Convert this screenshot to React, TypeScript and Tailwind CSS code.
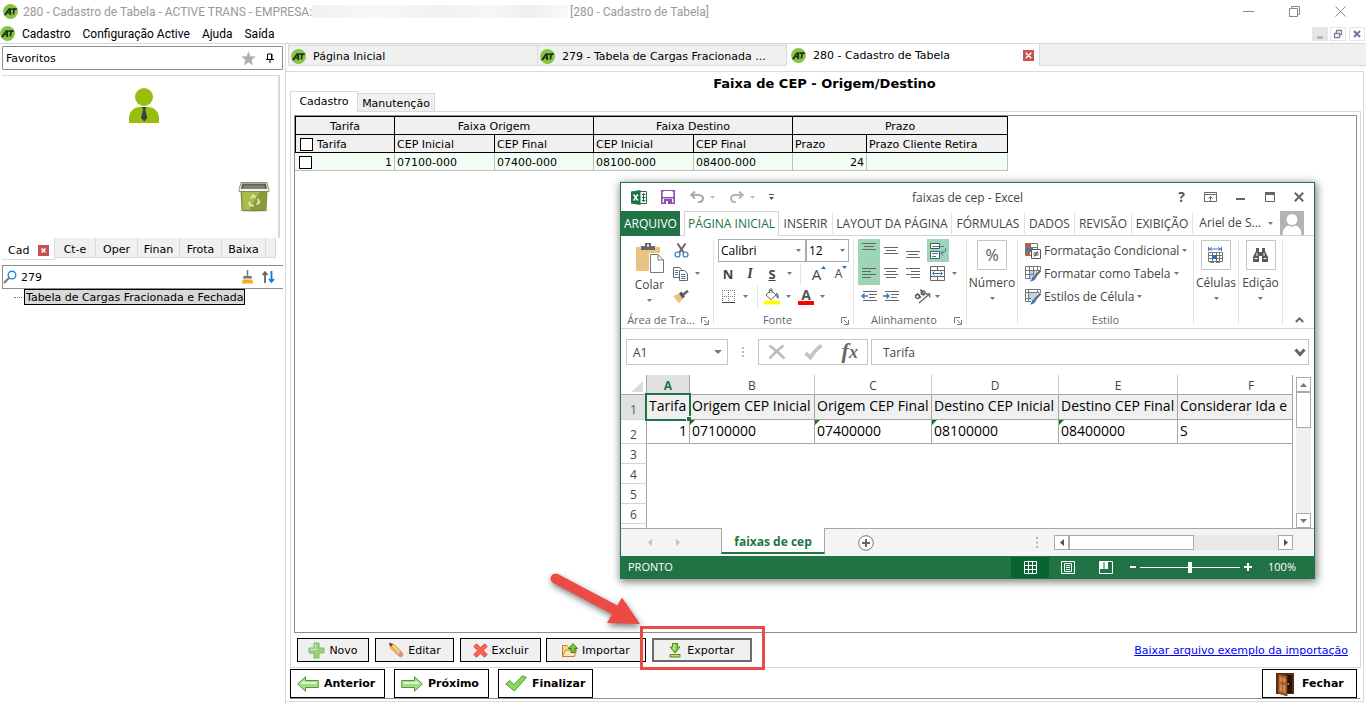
import React from "react";

type Kids = { children?: React.ReactNode };

const ui = "font-['Open_Sans','Noto_Sans',sans-serif]";
const chrome = "font-['Roboto','Open_Sans',sans-serif]";

function Logo() {
  return (
    <svg width="15" height="15" viewBox="0 0 15 15" className="shrink-0" aria-hidden="true">
      <circle cx="7.5" cy="7.5" r="7.4" fill="#84c441" />
      <path d="M0.8 11.2 5.6 4.3H8L8.2 11H6.3L6.2 9.3H4.4L3.1 11.2ZM5.2 8h1L6.1 6.3ZM8.4 4.3H14L13.6 6H11.9L11.2 10.6H9.5L10.2 6H8.3Z" fill="#20301a" />
    </svg>
  );
}

function Caret({ color = "#777" }: { color?: string }) {
  return (
    <svg width="5" height="3" viewBox="0 0 5 3" className="shrink-0" aria-hidden="true">
      <path d="M0 0H5L2.5 3Z" fill={color} />
    </svg>
  );
}

function RedClose({ label }: { label: string }) {
  return (
    <button aria-label={label} className="flex h-[11px] w-[11px] shrink-0 items-center justify-center bg-[#c75050]">
      <svg width="7" height="7" viewBox="0 0 7 7" aria-hidden="true">
        <path d="M1 1.2 6 5.8M6 1.2 1 5.8M0.5 1H2.2M4.8 1H6.5M0.5 6H2.2M4.8 6H6.5" stroke="#fff" strokeWidth="1.2" />
      </svg>
    </button>
  );
}

/* ---------- window chrome ---------- */

function TitleBar() {
  return (
    <header className={`flex h-[23px] items-center pl-[3px] text-xs text-[#999] ${chrome}`}>
      <Logo />
      <span className="ml-[5px] min-w-[280px] shrink-0 whitespace-nowrap">280 - Cadastro de Tabela - ACTIVE TRANS - EMPRESA:</span>
      <span className="h-[13px] w-[256px] bg-[linear-gradient(90deg,#f1f1f1,#f8f8f8_25%,#f1f1f1_50%,#f7f7f7_70%,#efefef_85%,#f9f9f9)]" />
      <span className="ml-[2px] whitespace-nowrap">[280 - Cadastro de Tabela]</span>
      <div className="ml-auto flex items-center gap-[35px] pr-5">
        <button aria-label="Minimizar">
          <svg width="11" height="11" viewBox="0 0 11 11" className="block"><path d="M0 5.5H11" stroke="#888" /></svg>
        </button>
        <button aria-label="Restaurar">
          <svg width="11" height="11" viewBox="0 0 11 11" className="block"><path d="M0.5 2.5H8.5V10.5H0.5ZM2.5 2.5V0.5H10.5V8.5H8.5" stroke="#888" fill="none" /></svg>
        </button>
        <button aria-label="Fechar janela">
          <svg width="11" height="11" viewBox="0 0 11 11" className="block"><path d="M0.5 0.5 10.5 10.5M10.5 0.5 0.5 10.5" stroke="#888" /></svg>
        </button>
      </div>
    </header>
  );
}

function MenuBar() {
  return (
    <nav className={`flex h-5 items-center text-xs text-black ${chrome}`}>
      <Logo />
      <div className="ml-[7px] flex gap-3 pt-[2px]">
        <button>Cadastro</button>
        <button>Configuração Active</button>
        <button>Ajuda</button>
        <button>Saída</button>
      </div>
      <div className="ml-auto flex gap-[2px] pt-[2px] pr-px">
        <button aria-label="Minimizar documento" className="flex h-[14px] w-4 items-center justify-center bg-[#e5e5e5]">
          <svg width="10" height="10" viewBox="0 0 10 10"><path d="M2 8.5H8" stroke="#9aa9bd" strokeWidth="2" /></svg>
        </button>
        <button aria-label="Restaurar documento" className="flex h-[14px] w-4 items-center justify-center border border-[#e5e5e5]">
          <svg width="10" height="10" viewBox="0 0 10 10"><path d="M1.5 4.5H6.5V8.5H1.5ZM1 4.5H7M3.5 4V1.5H8.5V5.5H7M3 1.5H9" stroke="#74849a" strokeWidth="1.3" fill="none" /></svg>
        </button>
        <button aria-label="Fechar documento" className="ml-px flex h-[14px] w-4 items-center justify-center border border-[#e5e5e5]">
          <svg width="8" height="8" viewBox="0 0 8 8"><path d="M1 1 7 7M7 1 1 7" stroke="#6d7d93" strokeWidth="2.2" /></svg>
        </button>
      </div>
    </nav>
  );
}

/* ---------- sidebar ---------- */

function Sidebar() {
  return (
    <aside className="flex w-[286px] shrink-0 flex-col border-r border-[#d9d9d9] pt-[2px] pl-[2px]">
      <div className="mr-[2px] flex h-6 items-center rounded-[1px] border border-[#8c8c8c] pl-[3px]">
        <span>Favoritos</span>
        <button aria-label="Marcar favorito" className="ml-auto">
          <svg width="15" height="15" viewBox="0 0 15 15" className="block">
            <path d="M7.5 0.3 9.4 5.3 14.8 5.5 10.6 8.9 12 14.5 7.5 11.2 3 14.5 4.4 8.9 0.2 5.5 5.6 5.3Z" fill="#b0b0b0" />
          </svg>
        </button>
        <button aria-label="Fixar painel" className="mr-2 ml-[10px]">
          <svg width="8" height="10" viewBox="0 0 8 10" className="block">
            <path d="M1.5 6V1H5.5V6M0 6.5H8M4 7V10" stroke="#000" fill="none" />
            <path d="M5 1H6.5V6H5Z" fill="#000" />
          </svg>
        </button>
      </div>

      <div className="mt-[5px] mr-[5px] flex h-[163px] flex-col justify-between border-t border-r-2 border-[#d9d9d9]">
        <svg width="32" height="35" viewBox="0 0 32 35" className="mt-3 ml-[126px]" role="img" aria-label="Usuário">
          <circle cx="16" cy="9" r="9" fill="#97be0d" />
          <path d="M1 35V29C2 22 7 19 12.500 19H19.500C25 19 30 22 31 29V35Z" fill="#97be0d" />
          <path d="M14 19H18.200L17.300 22 19.300 30 16.200 33.500 13 30 15 22Z" fill="#3c4043" />
        </svg>
        <svg width="32" height="32" viewBox="0 0 32 32" className="mb-[25px] ml-[236px]" role="img" aria-label="Lixeira">
          <ellipse cx="16" cy="29.500" rx="14.500" ry="1.500" fill="#cfcfca" />
          <path d="M3 10H29L28 28.500Q27.900 29.500 27 29.500H5Q4.100 29.500 4 28.500Z" fill="#8b9b38" stroke="#6c7b26" strokeWidth="0.800" />
          <path d="M4 11H22L11 29H5Z" fill="#b3c255" opacity=".8" />
          <path d="M3 1.500H29L31 9V10.500H1V9Z" fill="#ecede9" stroke="#76803c" strokeWidth="0.800" />
          <path d="M4 2.500H28L29 8H3Z" fill="#5d605e" />
          <path d="M6 4.500H26L27.500 8H4.500Z" fill="#80837f" />
          <path d="M1.500 9H30.500" stroke="#fff" />
          <path d="M13 17.500 15 14.500 17.500 16.500M19.500 18 21.300 21 18.700 23.500M16 24.500 12 24.300 11.200 20.700" stroke="#dfe7ae" strokeWidth="2" fill="none" />
        </svg>
      </div>

      <div role="tablist" className="flex h-[22px] items-start pr-[6px]">
        <button role="tab" aria-selected="true" className="flex h-[22px] w-[53px] items-center gap-[9px] border-r border-b border-[#d9d9d9] pt-[3px] pl-[6px]">
          Cad
          <svg width="11" height="11" viewBox="0 0 11 11" aria-hidden="true">
            <path d="M0 0H11V11H0Z" fill="#c75050" />
            <path d="M3.500 3.500 7.500 7.500M7.500 3.500 3.500 7.500" stroke="#fff" strokeWidth="1.600" />
          </svg>
        </button>
        {["Ct-e", "Oper", "Finan", "Frota", "Baixa"].map((t) => (
          <button
            key={t}
            role="tab"
            aria-selected="false"
            className={`h-5 border-r border-b border-[#d9d9d9] bg-[#f0f0f0] pt-[3px] ${t === "Ct-e" ? "w-[41px]" : t === "Baixa" ? "w-11" : "w-[42px]"}`}
          >
            {t}
          </button>
        ))}
        <span className="h-5 w-[10px] border-r border-b border-[#d9d9d9] bg-[#f0f0f0]" />
      </div>

      <div className="mt-[5px] mr-[2px] flex h-6 items-center border-y border-l border-[#8c8c8c]">
        <svg width="14" height="14" viewBox="0 0 14 14" className="shrink-0" aria-hidden="true">
          <circle cx="9" cy="5" r="3.800" stroke="#2a86d8" strokeWidth="1.400" fill="#fff" />
          <path d="M6.200 7.800 1 13" stroke="#777" strokeWidth="2" />
        </svg>
        <input aria-label="Pesquisar no menu" defaultValue="279" className="ml-1 h-5 w-0 flex-1 bg-transparent outline-none" />
        <button aria-label="Limpar pesquisa" className="mr-[9px]">
          <svg width="11" height="14" viewBox="0 0 11 14" className="block">
            <path d="M5.500 0V6" stroke="#777" strokeWidth="1.500" />
            <path d="M1.500 6H9.500L10 8.500H1Z" fill="#777" />
            <path d="M0.800 9.500H10.200L11 13.500H0Z" fill="#fba919" />
          </svg>
        </button>
        <button aria-label="Ordenar" className="mr-2">
          <svg width="13" height="12" viewBox="0 0 13 12" className="block">
            <path d="M3 12V2M0.500 4 3 1.200 5.500 4" stroke="#666" strokeWidth="1.800" fill="none" />
            <path d="M9.500 0V10M7 8 9.500 10.800 12 8" stroke="#0a78d4" strokeWidth="1.800" fill="none" />
          </svg>
        </button>
      </div>

      <div role="tree" className="flex h-4 items-center pl-3">
        <span className="w-2 border-t border-dotted border-[#808080]" />
        <span role="treeitem" className="ml-[2px] flex h-4 items-center border border-black bg-[#d9d9d9] px-px whitespace-nowrap">
          Tabela de Cargas Fracionada e Fechada
        </span>
      </div>
    </aside>
  );
}

/* ---------- document tabs and range table ---------- */

function DocumentTabs() {
  return (
    <div role="tablist" className="ml-[2px] flex h-[22px] items-end border-b border-[#d9d9d9] bg-[#f0f0f0]">
      <button role="tab" aria-selected="false" className="flex h-5 w-[249px] items-center gap-[7px] border-t border-l border-[#d9d9d9] pt-[2px] pl-[2px]">
        <Logo />
        Página Inicial
      </button>
      <button role="tab" aria-selected="false" className="flex h-5 w-[249px] items-center gap-[7px] border-t border-l border-[#d9d9d9] pt-[2px] pl-[2px] whitespace-nowrap">
        <Logo />
        279 - Tabela de Cargas Fracionada ...
      </button>
      <div className="-mb-px flex h-[22px] w-[254px] items-center border-x border-[#d9d9d9] bg-white pr-[5px] pl-1">
        <button role="tab" aria-selected="true" className="flex items-center gap-[7px]">
          <Logo />
          280 - Cadastro de Tabela
        </button>
        <span className="ml-auto">
          <RedClose label="Fechar aba" />
        </span>
      </div>
    </div>
  );
}

const groupHead = "h-[19px] border-r border-y border-black bg-[#f0f0f0] p-0 pt-px text-center font-normal";
const colHead = "h-[18px] border-r border-b border-black bg-[#f0f0f0] p-0 pt-px pl-[2px] text-left font-normal";
const bodyCell = "h-[18px] border-r border-b border-[#c0c0c0] bg-[#f4fdf4] p-0 px-[2px] pt-px";

function RangeTable() {
  return (
    <table className="w-[713px] table-fixed border-separate border-spacing-0">
      <colgroup>
        <col className="w-[100px]" /><col className="w-[100px]" /><col className="w-[99px]" /><col className="w-[100px]" />
        <col className="w-[99px]" /><col className="w-[74px]" /><col className="w-[141px]" />
      </colgroup>
      <thead>
        <tr>
          <th className={`${groupHead} border-l`}>Tarifa</th>
          <th colSpan={2} className={groupHead}>Faixa Origem</th>
          <th colSpan={2} className={groupHead}>Faixa Destino</th>
          <th colSpan={2} className={groupHead}>Prazo</th>
        </tr>
        <tr>
          <th className={`${colHead} border-l`}>
            <label className="flex items-center gap-1 pl-[2px]">
              <input type="checkbox" className="h-[13px] w-[13px] appearance-none border border-black bg-white" />
              Tarifa
            </label>
          </th>
          {["CEP Inicial", "CEP Final", "CEP Inicial", "CEP Final", "Prazo", "Prazo Cliente Retira"].map((t, i) => (
            <th key={i} className={colHead}>{t}</th>
          ))}
        </tr>
      </thead>
      <tbody>
        <tr>
          <td className={bodyCell}>
            <div className="flex items-center justify-between pl-[2px]">
              <input type="checkbox" aria-label="Selecionar tarifa 1" className="h-[13px] w-[13px] appearance-none border border-black bg-white" />
              1
            </div>
          </td>
          <td className={bodyCell}>07100-000</td>
          <td className={bodyCell}>07400-000</td>
          <td className={bodyCell}>08100-000</td>
          <td className={bodyCell}>08400-000</td>
          <td className={`${bodyCell} text-right`}>24</td>
          <td className={bodyCell} />
        </tr>
      </tbody>
    </table>
  );
}

/* ---------- spreadsheet window ---------- */

function QuickAccess() {
  return (
    <div className="flex h-7 items-center pr-[10px] pl-[10px]">
      <svg width="16" height="15" viewBox="0 0 16 15" role="img" aria-label="Excel">
        <path d="M9 1.500H15.500V13.500H9M11 4.500H14.500M11 7.500H14.500M11 10.500H14.500M12.500 3V12" stroke="#1e7145" fill="none" />
        <path d="M0 1.500 9.500 0V15L0 13.500Z" fill="#1e7145" />
        <path d="M2.600 4.500 6.800 10.500M6.800 4.500 2.600 10.500" stroke="#fff" strokeWidth="1.500" />
      </svg>
      <button aria-label="Salvar" className="ml-[14px]">
        <svg width="14" height="14" viewBox="0 0 14 14" className="block">
          <path d="M0.800 0.800H13.200V13.200H0.800Z" fill="#fff" stroke="#8d4db5" strokeWidth="1.600" />
          <path d="M0 7H14V8.500H0ZM3 9H11V14H3Z" fill="#8d4db5" />
          <path d="M3 1H11V6H3ZM5 11H7V14H5Z" fill="#fff" />
        </svg>
      </button>
      <button aria-label="Desfazer" className="ml-[15px] flex items-center gap-[6px]">
        <svg width="14" height="12" viewBox="0 0 14 12"><path d="M5 0.500 1.200 4 5 7.500M1.500 4H9Q13 4.500 13 7.500 13 10.500 9.500 11.200H8" stroke="#aaa" strokeWidth="2.100" fill="none" /></svg>
        <Caret color="#bbb" />
      </button>
      <button aria-label="Refazer" className="ml-[15px] flex items-center gap-[6px]">
        <svg width="14" height="12" viewBox="0 0 14 12"><path d="M9 0.500 12.800 4 9 7.500M12.500 4H5Q1 4.500 1 7.500 1 10.500 4.500 11.200H6" stroke="#b4b4b4" strokeWidth="2" fill="none" /></svg>
        <Caret color="#bbb" />
      </button>
      <button aria-label="Personalizar barra" className="ml-[14px]">
        <svg width="5" height="6" viewBox="0 0 5 6" className="block"><path d="M0 0H5V1H0ZM0 3H5L2.500 6Z" fill="#555" /></svg>
      </button>
      <span className="ml-[138px] pt-px whitespace-nowrap">faixas de cep - Excel</span>
      <div className="ml-auto flex items-center gap-[19px] text-[#555]">
        <button aria-label="Ajuda do Excel" className="text-sm leading-4 font-bold">?</button>
        <button aria-label="Opções da faixa">
          <svg width="13" height="10" viewBox="0 0 13 10" className="block"><path d="M0.500 0.500H12.500V9.500H0.500ZM0.500 2.500H12.500M6.500 9V4.500M4.500 6.500 6.500 4.500 8.500 6.500" stroke="#666" fill="none" /></svg>
        </button>
        <button aria-label="Minimizar planilha">
          <svg width="10" height="10" viewBox="0 0 10 10" className="block"><path d="M0 7H9" stroke="#666" strokeWidth="2" /></svg>
        </button>
        <button aria-label="Maximizar planilha">
          <svg width="10" height="10" viewBox="0 0 10 10" className="block"><path d="M0.500 0.500H9.500V9.500H0.500Z" stroke="#666" fill="none" /><path d="M0 0H10V3H0Z" fill="#666" /></svg>
        </button>
        <button aria-label="Fechar planilha">
          <svg width="10" height="10" viewBox="0 0 10 10" className="block"><path d="M0.800 0.800 9.200 9.200M9.200 0.800 0.800 9.200" stroke="#666" strokeWidth="2" /></svg>
        </button>
      </div>
    </div>
  );
}

function RibbonTabs() {
  const base = "h-[21px] shrink-0 border-r border-[#e1e1e1] pt-[2px] whitespace-nowrap";
  return (
    <div role="tablist" className="flex h-[25px] items-center border-b border-[#d4d4d4]">
      <button role="tab" className="h-[25px] w-[59px] shrink-0 bg-[#217346] pt-px text-white">ARQUIVO</button>
      <button role="tab" aria-selected="true" className="-mb-px ml-1 h-[25px] w-[95px] shrink-0 border-x border-t border-[#d4d4d4] bg-white whitespace-nowrap text-[#217346]">
        PÁGINA INICIAL
      </button>
      <button role="tab" className={`${base} w-[54px]`}>INSERIR</button>
      <button role="tab" className={`${base} w-[119px]`}>LAYOUT DA PÁGINA</button>
      <button role="tab" className={`${base} w-[73px]`}>FÓRMULAS</button>
      <button role="tab" className={`${base} w-[50px]`}>DADOS</button>
      <button role="tab" className={`${base} w-[57px]`}>REVISÃO</button>
      <button role="tab" className={`${base} w-[61px]`}>EXIBIÇÃO</button>
      <button className="ml-auto flex items-center gap-[7px] whitespace-nowrap">
        Ariel de S...
        <Caret />
      </button>
      <svg width="24" height="24" viewBox="0 0 24 24" className="mr-[10px] ml-[7px] shrink-0 self-start" role="img" aria-label="Conta">
        <path d="M0 0H24V24H0Z" fill="#b3b3b3" />
        <circle cx="12" cy="8.500" r="5.500" fill="#fff" />
        <path d="M2.500 24Q3 15 9 14.500L12 16 15 14.500Q21 15 21.500 24Z" fill="#fff" />
      </svg>
    </div>
  );
}

function Launcher() {
  return (
    <svg width="8" height="8" viewBox="0 0 8 8" className="shrink-0" aria-hidden="true">
      <path d="M0.500 6V0.500H6M3 3 6.500 6.500M7.500 3V7.500H3" stroke="#777" fill="none" />
    </svg>
  );
}

function Group({ width, label, launcher, children }: Kids & { width: string; label?: string; launcher?: boolean }) {
  return (
    <section aria-label={label} className={`flex shrink-0 flex-col border-r border-[#e1e1e1] ${width}`}>
      <div className="-mt-px h-[70px] shrink-0">{children}</div>
      <div className="flex h-[19px] shrink-0 items-end text-[11px] leading-4 text-[#666]">
        <span className="flex-1 text-center whitespace-nowrap">{label}</span>
        {launcher && <span className="pr-1 pb-[3px]"><Launcher /></span>}
      </div>
    </section>
  );
}

function Rule() {
  return <span className="h-[22px] w-px bg-[#e1e1e1]" />;
}

function Lines({ rows }: { rows: Array<[number, number, number]> }) {
  return (
    <svg width="16" height="15" viewBox="0 0 16 15" aria-hidden="true">
      {rows.map(([y, a, b]) => (
        <path key={y} d={`M${a} ${y + 0.5}H${b}`} stroke="#666" />
      ))}
    </svg>
  );
}

function Tool({ label, width, on, children }: Kids & { label: string; width: string; on?: boolean }) {
  return (
    <button aria-label={label} className={`flex h-[23px] shrink-0 items-center justify-center ${width} ${on ? "bg-[#9fd5b7]" : ""}`}>
      {children}
    </button>
  );
}

function BigTool({ label, children }: Kids & { label: string }) {
  return (
    <button className="flex w-full flex-col items-center pt-px">
      <span className="flex h-[30px] w-[30px] items-center justify-center border border-[#c6c6c6]">{children}</span>
      <span className="mt-1 leading-[18px] whitespace-nowrap">{label}</span>
      <span className="flex h-3 items-center"><Caret /></span>
    </button>
  );
}

function Brush() {
  return (
    <>
      <path d="M15.500 4.500 9.500 11" stroke="#666" strokeWidth="2.200" />
      <path d="M9.500 10 11 12Q9 15.500 4.500 15.500 7 13.500 7 11.500Z" fill="#3b78b8" />
    </>
  );
}

function Ribbon() {
  return (
    <div className="flex h-[93px] border-b border-[#d4d4d4] py-1">
      <Group width="w-[93px]" label="Área de Tra..." launcher>
        <div className="flex">
          <button className="flex w-[52px] flex-col items-center pt-1 pl-[5px]">
            <svg width="28" height="30" viewBox="0 0 28 30" aria-hidden="true">
              <path d="M0 4H24V28H0Z" fill="#eac282" />
              <path d="M5 7V3H9V0H15V3H19V7Z" fill="#666" />
              <path d="M11 1.500H13V3.500H11Z" fill="#fff" />
              <path d="M13 10H23L28 16V30H13Z" fill="#fff" />
              <path d="M14.500 11.500H22L27.500 17V29.500H14.500ZM22 11.500V17H27.500" fill="#fff" stroke="#777" />
            </svg>
            <span className="mt-[3px] leading-[18px]">Colar</span>
            <span className="flex h-3 items-center"><Caret /></span>
          </button>
          <div className="flex flex-col">
            <Tool label="Recortar" width="w-4">
              <svg width="15" height="15" viewBox="0 0 15 15">
                <path d="M3.500 0.500 10 10M11.500 0.500 5 10" stroke="#666" strokeWidth="2" />
                <circle cx="3.500" cy="11.500" r="2.500" stroke="#3b78b8" strokeWidth="1.200" fill="none" /><circle cx="11.500" cy="11.500" r="2.500" stroke="#3b78b8" strokeWidth="1.200" fill="none" />
              </svg>
            </Tool>
            <Tool label="Copiar" width="w-[27px]">
              <svg width="15" height="14" viewBox="0 0 15 14">
                <path d="M0.500 0.500H6.500L8.500 2.500V10.500H0.500Z" fill="#fff" stroke="#666" />
                <path d="M6.500 3.500H11.500L14.500 6.500V13.500H6.500Z" fill="#fff" stroke="#666" />
                <path d="M2 3.500H5M2 5.500H5M2 7.500H5M8 7.500H12.500M8 9.500H12.500M8 11.500H12.500" stroke="#3b78b8" />
              </svg>
              <span className="ml-[7px]"><Caret /></span>
            </Tool>
            <Tool label="Pincel de formatação" width="w-4">
              <svg width="16" height="14" viewBox="0 0 16 14">
                <path d="M0 6 6 3.500 10 8.500 6 13.500Z" fill="#eac282" />
                <path d="M6 3.500 8.500 1.500 12 6.500 9.500 8.500Z" fill="#555" />
                <path d="M10.500 4.500 15 0.800" stroke="#666" strokeWidth="2.600" />
              </svg>
            </Tool>
          </div>
        </div>
      </Group>

      <Group width="w-[140px]" label="Fonte" launcher>
        <div className="flex h-[23px] items-center pl-1 text-black">
          <span className="relative flex h-[23px] w-[88px] items-center">
            <select aria-label="Fonte" className="h-[23px] w-full appearance-none border border-[#ababab] bg-white pl-[2px]">
              <option>Calibri</option>
            </select>
            <span className="pointer-events-none absolute right-[5px]"><Caret /></span>
          </span>
          <span className="relative flex h-[23px] w-[43px] items-center">
            <select aria-label="Tamanho da fonte" className="h-[23px] w-full appearance-none border border-[#ababab] bg-white pl-[2px]">
              <option>12</option>
            </select>
            <span className="pointer-events-none absolute right-[4px]"><Caret /></span>
          </span>
        </div>
        <div className="flex h-[23px] items-center pl-[3px] text-[13px] leading-4 text-[#444]">
          <Tool label="Negrito" width="w-[22px]"><b>N</b></Tool>
          <Tool label="Itálico" width="w-[22px]"><i className="font-['Liberation_Serif',serif] text-sm font-bold">I</i></Tool>
          <Tool label="Sublinhado" width="w-[22px]"><b className="underline">S</b></Tool>
          <span className="mr-2 ml-1"><Caret /></span>
          <Rule />
          <Tool label="Aumentar fonte" width="ml-[7px] w-[22px]">
            <span className="text-[15px]">A</span><svg width="5" height="3" viewBox="0 0 5 3" className="mb-3"><path d="M0 3H5L2.500 0Z" fill="#2f6cab" /></svg>
          </Tool>
          <Tool label="Diminuir fonte" width="w-[22px]">
            <span className="text-xs">A</span><svg width="5" height="3" viewBox="0 0 5 3" className="mb-3"><path d="M0 0H5L2.500 3Z" fill="#2f6cab" /></svg>
          </Tool>
        </div>
        <div className="flex h-[23px] items-center pl-[3px]">
          <Tool label="Bordas" width="w-[22px]">
            <svg width="13" height="13" viewBox="0 0 13 13">
              <path d="M0.500 0V12M6.500 0V12M12.500 0V12M0 0.500H13M0 6.500H13" stroke="#777" strokeDasharray="1 1" />
              <path d="M0 12.500H13" stroke="#444" />
            </svg>
          </Tool>
          <span className="mr-[9px] ml-1"><Caret /></span>
          <Rule />
          <Tool label="Cor de preenchimento" width="ml-[3px] w-[22px]">
            <svg width="16" height="17" viewBox="0 0 16 17">
              <path d="M0 12.500H16V16.500H0Z" fill="#ff0" />
              <path d="M7 2 12 7 7 11.500 2 7ZM5.500 5V1.500Q7 0 8 1.500V5" stroke="#666" fill="#fff" />
              <path d="M12 4.500Q15.500 6 14.500 11L12.500 9.500Z" fill="#3b78b8" />
            </svg>
          </Tool>
          <span className="mr-[7px] ml-[3px]"><Caret /></span>
          <Tool label="Cor da fonte" width="w-4">
            <span className="flex w-4 flex-col items-center">
              <b className="text-sm leading-[12px] text-[#555]">A</b>
              <span className="h-1 w-4 bg-[#f00]" />
            </span>
          </Tool>
          <span className="ml-[6px]"><Caret /></span>
        </div>
      </Group>

      <Group width="w-[113px]" label="Alinhamento" launcher>
        <div className="flex pl-1">
          <Tool label="Alinhar acima" width="w-[22px]" on><Lines rows={[[0, 1, 15], [3, 3, 13], [6, 1, 15]]} /></Tool>
          <Tool label="Centralizar verticalmente" width="w-[22px]"><Lines rows={[[4, 1, 15], [7, 3, 13], [10, 1, 15]]} /></Tool>
          <Tool label="Alinhar abaixo" width="w-[22px]"><Lines rows={[[8, 1, 15], [11, 3, 13], [14, 1, 15]]} /></Tool>
          <Tool label="Quebrar texto" width="ml-[3px] w-[22px]" on>
            <svg width="17" height="16" viewBox="0 0 17 16">
              <path d="M0.500 0.500H9.500V5.500H0.500ZM0.500 8.500H9.500V15.500H0.500Z" fill="#fff" stroke="#555" />
              <path d="M2 3.500H14M2 10.500H8M2 13.500H6M15.500 5V8Q15 10 11 10M13 7.500 10.800 10 13 12.500" stroke="#3b78b8" fill="none" />
            </svg>
          </Tool>
        </div>
        <div className="flex items-center pl-1">
          <Tool label="Alinhar à esquerda" width="w-[22px]" on><Lines rows={[[2, 1, 15], [5, 1, 10], [8, 1, 15], [11, 1, 10]]} /></Tool>
          <Tool label="Centralizar" width="w-[22px]"><Lines rows={[[2, 1, 15], [5, 3, 13], [8, 1, 15], [11, 3, 13]]} /></Tool>
          <Tool label="Alinhar à direita" width="w-[22px]"><Lines rows={[[2, 1, 15], [5, 6, 15], [8, 1, 15], [11, 6, 15]]} /></Tool>
          <Tool label="Mesclar e centralizar" width="ml-[3px] w-[20px]">
            <svg width="15" height="15" viewBox="0 0 15 15">
              <path d="M0.500 0.500H14.500V14.500H0.500ZM0.500 4.500H14.500M0.500 10.500H14.500M7.500 0.500V4.500M7.500 10.500V14.500" stroke="#666" fill="none" />
              <path d="M2.500 7.500H12.500M4.500 5.500 2.500 7.500 4.500 9.500M10.500 5.500 12.500 7.500 10.500 9.500" stroke="#3b78b8" fill="none" />
            </svg>
          </Tool>
          <span className="ml-[5px]"><Caret /></span>
        </div>
        <div className="flex items-center pl-1">
          <Tool label="Diminuir recuo" width="w-[22px]">
            <svg width="16" height="12" viewBox="0 0 16 12">
              <path d="M2 0.500H16M8 3.500H16M8 6.500H14M2 9.500H16" stroke="#666" />
              <path d="M0 5 3.500 1.700V4.200H7V5.800H3.500V8.300Z" fill="#3b78b8" />
            </svg>
          </Tool>
          <Tool label="Aumentar recuo" width="w-[22px]">
            <svg width="16" height="12" viewBox="0 0 16 12">
              <path d="M2 0.500H16M8 3.500H16M8 6.500H14M2 9.500H16" stroke="#666" />
              <path d="M7 5 3.500 1.700V4.200H0V5.800H3.500V8.300Z" fill="#3b78b8" />
            </svg>
          </Tool>
          <span className="ml-1"><Rule /></span>
          <Tool label="Orientação" width="ml-[7px] w-[18px]">
            <svg width="17" height="15" viewBox="0 0 17 15">
              <path d="M5 14 15.500 5M12 5H15.700V8.500" stroke="#666" strokeWidth="1.300" fill="none" />
              <circle cx="3.500" cy="7.500" r="2" stroke="#555" strokeWidth="1.300" fill="none" />
              <path d="M3 4.500 7 8.500M6.200 0.500 10.500 5.500" stroke="#555" strokeWidth="1.300" />
              <circle cx="9.200" cy="3.800" r="2" stroke="#555" strokeWidth="1.300" fill="none" />
            </svg>
          </Tool>
          <span className="ml-1"><Caret /></span>
        </div>
      </Group>

      <Group width="w-[51px]">
        <BigTool label="Número"><span className="text-base text-[#555]">%</span></BigTool>
      </Group>

      <Group width="w-[176px]" label="Estilo">
        <button className="flex h-[23px] items-center gap-[3px] pl-[7px] whitespace-nowrap">
          <svg width="16" height="16" viewBox="0 0 16 16" aria-hidden="true">
            <path d="M0.500 0.500H12.500V12.500H0.500ZM0.500 4.500H12.500M0.500 8.500H12.500M4.500 0.500V12.500" stroke="#777" fill="none" />
            <path d="M1 1H6V4H1ZM1 9H5V12H1Z" fill="#d0532b" /><path d="M1 5H8V8H1Z" fill="#3b78b8" />
            <path d="M6.500 6.500H15.500V15.500H6.500Z" fill="#fff" stroke="#555" /><path d="M8.500 10H13.500M8.500 12H13.500M12.500 8.500 9.500 13.500" stroke="#444" />
          </svg>
          Formatação Condicional
          <Caret />
        </button>
        <button className="flex h-[23px] items-center gap-[3px] pl-[7px] whitespace-nowrap">
          <svg width="16" height="16" viewBox="0 0 16 16" aria-hidden="true">
            <path d="M4 4H12V12H4Z" fill="#bdd3ea" />
            <path d="M0.500 0.500H15.500V4M0.500 0.500V12.500H6M0.500 4.500H14M0.500 8.500H9M4.500 0.500V12.500M8.500 0.500V9M12.500 0.500V4" stroke="#777" fill="none" />
            <Brush />
          </svg>
          Formatar como Tabela
          <Caret />
        </button>
        <button className="flex h-[23px] items-center gap-[3px] pl-[7px] whitespace-nowrap">
          <svg width="16" height="16" viewBox="0 0 16 16" aria-hidden="true">
            <path d="M4 4H12V11H4Z" fill="#bdd3ea" />
            <path d="M0.500 0.500H15.500V4M0.500 0.500V12.500H6M0.500 3.500H14M3.500 0.500V12.500M0.500 9.500H6M12.500 0.500V4" stroke="#777" fill="none" />
            <Brush />
          </svg>
          Estilos de Célula
          <Caret />
        </button>
      </Group>

      <Group width="w-[45px]">
        <BigTool label="Células">
          <svg width="16" height="17" viewBox="0 0 16 17" aria-hidden="true">
            <path d="M0.500 0V4M13.500 0V4M1 2H13M3.500 0.500 1.500 2 3.500 3.500M10.500 0.500 12.500 2 10.500 3.500" stroke="#3b78b8" fill="none" />
            <path d="M0.500 5.500H14.500V14.500H0.500ZM0.500 8.500H14.500M0.500 11.500H14.500M4.500 5.500V14.500M8.500 5.500V14.500M11.500 5.500V14.500" stroke="#777" fill="none" />
            <path d="M4 8H9V12H4Z" fill="#2f6cab" />
            <path d="M2 15.500H6M8 15.500H12" stroke="#777" />
          </svg>
        </BigTool>
      </Group>

      <Group width="w-[44px]">
        <BigTool label="Edição">
          <svg width="15" height="14" viewBox="0 0 15 14" aria-hidden="true">
            <path d="M3 0H6V4H9V0H12V3L15 9V14H9V8H6V14H0V9L3 3Z" fill="#5a5a5a" />
            <path d="M1.500 10.500H4.500M10.500 10.500H13.500M4 5V8M11 5V8" stroke="#fff" />
          </svg>
        </BigTool>
      </Group>

      <button aria-label="Recolher faixa" className="mr-[10px] ml-auto self-end pb-[1px]">
        <svg width="9" height="6" viewBox="0 0 9 6" className="block"><path d="M0.800 5 4.500 1.300 8.200 5" stroke="#666" strokeWidth="1.800" fill="none" /></svg>
      </button>
    </div>
  );
}

function FormulaBar() {
  return (
    <div className="flex h-[46px] items-center pr-[5px] pl-[5px]">
      <span className="relative flex h-[26px] w-[102px] shrink-0 items-center">
        <input aria-label="Caixa de nome" defaultValue="A1" className="h-[26px] w-full border border-[#c6c6c6] pl-[6px] outline-none" />
        <span className="pointer-events-none absolute right-[6px]">
          <svg width="8" height="4" viewBox="0 0 8 4" className="block"><path d="M0 0H8L4 4Z" fill="#777" /></svg>
        </span>
      </span>
      <svg width="2" height="12" viewBox="0 0 2 12" className="mx-[14px] shrink-0" aria-hidden="true"><path d="M0 1H2V3H0ZM0 5H2V7H0ZM0 9H2V11H0Z" fill="#b5b5b5" /></svg>
      <div className="mr-[3px] flex h-[26px] w-[110px] shrink-0 items-center justify-around border border-[#c6c6c6]">
        <button aria-label="Cancelar"><svg width="18" height="16" viewBox="0 0 18 16" className="block"><path d="M1.500 1.500Q9 7 16.500 14.500M15.500 1.500Q8 7 1.500 14.500" stroke="#bbb" strokeWidth="2.600" fill="none" /></svg></button>
        <button aria-label="Inserir"><svg width="19" height="16" viewBox="0 0 19 16" className="block"><path d="M1.500 9 6.500 13.500Q11 6 17.500 1.500" stroke="#c4c4c4" strokeWidth="3.800" fill="none" /></svg></button>
        <button aria-label="Inserir função" className="font-['Liberation_Serif',serif] text-[22px] leading-6 font-bold text-[#666] italic">
          f<span className="text-lg">x</span>
        </button>
      </div>
      <div className="flex h-[26px] flex-1 items-center border border-[#c6c6c6] pr-[2px]">
        <input aria-label="Barra de fórmulas" defaultValue="Tarifa" className="h-6 w-0 flex-1 pl-[11px] outline-none" />
        <svg width="12" height="9" viewBox="0 0 12 9" className="shrink-0" aria-hidden="true"><path d="M1.500 1.500 6 6.500 10.500 1.500" stroke="#666" strokeWidth="3" fill="none" /></svg>
      </div>
    </div>
  );
}

function TextCell({ children }: Kids) {
  return (
    <td className="relative border-r border-b border-[#a6a6a6] p-0 pb-px pl-[2px] text-left">
      <svg width="5" height="5" viewBox="0 0 5 5" className="absolute top-0 left-0" aria-hidden="true"><path d="M0 0H5L0 5Z" fill="#107c10" /></svg>
      {children}
    </td>
  );
}

function Sheet() {
  const letter = "border-r border-b border-[#c9c9c9] border-b-[#a6a6a6] p-0 pt-[2px] text-center font-normal text-[#444]";
  const rowNo = "border-r border-b border-[#d4d4d4] border-r-[#a6a6a6] p-0 text-center font-normal text-[#444]";
  const head = "border-r border-b border-[#a6a6a6] bg-[#f0f0f0] p-0 pl-[2px] pb-[2px] text-left whitespace-nowrap";
  return (
    <div className="flex h-[153px]">
      <div className="w-[672px] overflow-hidden border-r border-[#a6a6a6]">
        <table className="w-[704px] table-fixed border-separate border-spacing-0 text-sm leading-5 text-black">
          <colgroup>
            <col className="w-[26px]" /><col className="w-[43px]" /><col className="w-[125px]" /><col className="w-[117px]" />
            <col className="w-[127px]" /><col className="w-[119px]" /><col className="w-[147px]" />
          </colgroup>
          <thead className="text-xs leading-4">
            <tr className="h-5">
              <th className="border-r border-b border-[#a6a6a6] p-0">
                <svg width="12" height="11" viewBox="0 0 12 11" className="mt-[3px] ml-[10px] block" aria-hidden="true"><path d="M12 0V11H0Z" fill="#dcdcdc" /></svg>
              </th>
              <th className="border-r border-b border-[#a6a6a6] bg-[#e1e1e1] p-0 pt-[2px] text-center font-bold text-[#217346]">A</th>
              {["B", "C", "D", "E", "F"].map((l) => <th key={l} className={letter}>{l}</th>)}
            </tr>
          </thead>
          <tbody>
            <tr className="h-[25px]">
              <th className={`${rowNo} bg-[#e1e1e1] pt-[6px] text-xs leading-4 font-bold text-[#217346]`}>1</th>
              <td className="relative border-r border-b border-[#a6a6a6] bg-[#f0f0f0] p-0 pb-[2px] pl-[2px]">
                Tarifa
                <span className="absolute -inset-[2px] border-2 border-[#217346]" />
                <span className="absolute -right-[2px] -bottom-[2px] h-[5px] w-[5px] border-t border-l border-white bg-[#217346]" />
              </td>
              <td className={head}>Origem CEP Inicial</td>
              <td className={head}>Origem CEP Final</td>
              <td className={head}>Destino CEP Inicial</td>
              <td className={head}>Destino CEP Final</td>
              <td className={head}>Considerar Ida e</td>
            </tr>
            <tr className="h-6">
              <th className={`${rowNo} pt-[6px] text-xs leading-4`}>2</th>
              <td className="border-r border-b border-[#a6a6a6] p-0 pr-[2px] pb-px text-right">1</td>
              <TextCell>07100000</TextCell>
              <TextCell>07400000</TextCell>
              <TextCell>08100000</TextCell>
              <TextCell>08400000</TextCell>
              <td className="border-b border-[#a6a6a6] p-0 pb-px pl-[2px]">S</td>
            </tr>
            {[3, 4, 5, 6].map((n) => (
              <tr key={n} className="h-5 text-xs leading-4">
                <th className={`${rowNo} pt-[3px]`}>{n}</th>
                <td colSpan={6} className="p-0" />
              </tr>
            ))}
            <tr className="h-1">
              <th className="border-r border-[#a6a6a6] p-0" />
              <td colSpan={6} className="p-0" />
            </tr>
          </tbody>
        </table>
      </div>
      <div className="mt-[2px] ml-[3px] flex w-[15px] flex-col bg-[#f0f0f0]">
        <button aria-label="Rolar para cima" className="flex h-[15px] items-center justify-center border border-[#ababab] bg-white">
          <svg width="7" height="4" viewBox="0 0 7 4"><path d="M0 4H7L3.500 0Z" fill="#777" /></svg>
        </button>
        <span className="h-9 border border-[#ababab] bg-white" />
        <button aria-label="Rolar para baixo" className="mt-auto flex h-[15px] items-center justify-center border border-[#ababab] bg-white">
          <svg width="7" height="4" viewBox="0 0 7 4"><path d="M0 0H7L3.500 4Z" fill="#777" /></svg>
        </button>
      </div>
    </div>
  );
}

function SheetTabs() {
  return (
    <div className="flex h-7 items-center border-t border-[#a6a6a6] bg-[#f4f4f4]">
      <div className="flex w-[100px] items-center gap-6 pl-[27px]">
        <svg width="4" height="7" viewBox="0 0 4 7" aria-hidden="true"><path d="M4 0V7L0 3.500Z" fill="#c0c0c0" /></svg>
        <svg width="4" height="7" viewBox="0 0 4 7" aria-hidden="true"><path d="M0 0V7L4 3.500Z" fill="#c0c0c0" /></svg>
      </div>
      <button className="-mt-1 h-[26px] w-[104px] border-x border-b-2 border-x-[#a6a6a6] border-b-[#217346] bg-white pt-1 font-bold whitespace-nowrap text-[#217346]">
        faixas de cep
      </button>
      <button aria-label="Nova planilha" className="ml-[33px]">
        <svg width="16" height="16" viewBox="0 0 16 16" className="block"><circle cx="8" cy="8" r="7.300" fill="#fff" stroke="#777" /><path d="M8 4V12M4 8H12" stroke="#666" strokeWidth="2" /></svg>
      </button>
      <svg width="2" height="11" viewBox="0 0 2 11" className="mr-4 ml-auto" aria-hidden="true"><path d="M0 0H2V2H0ZM0 4.500H2V6.500H0ZM0 9H2V11H0Z" fill="#b5b5b5" /></svg>
      <div className="mr-[21px] flex h-[15px] w-[239px] bg-[#e8e8e8]">
        <button aria-label="Rolar para a esquerda" className="flex w-[15px] items-center justify-center border border-[#ababab] bg-white">
          <svg width="4" height="7" viewBox="0 0 4 7"><path d="M4 0V7L0 3.500Z" fill="#555" /></svg>
        </button>
        <span className="w-[125px] border border-[#ababab] bg-white" />
        <button aria-label="Rolar para a direita" className="ml-auto flex w-[15px] items-center justify-center border border-[#ababab] bg-white">
          <svg width="4" height="7" viewBox="0 0 4 7"><path d="M0 0V7L4 3.500Z" fill="#555" /></svg>
        </button>
      </div>
    </div>
  );
}

function StatusBar() {
  return (
    <div className="flex h-[22px] items-center bg-[#217346] pr-[18px] pl-[7px] text-[11px] text-white">
      <span>PRONTO</span>
      <div className="ml-auto flex items-center">
        <button aria-label="Modo normal" className="flex h-[21px] w-[38px] items-center justify-center bg-[#0a6332]">
          <svg width="13" height="13" viewBox="0 0 13 13"><path d="M0.500 0.500H12.500V12.500H0.500ZM0.500 4.500H12.500M0.500 8.500H12.500M4.500 0.500V12.500M8.500 0.500V12.500" stroke="#fff" fill="none" /></svg>
        </button>
        <button aria-label="Layout da página" className="flex h-[21px] w-[38px] items-center justify-center">
          <svg width="14" height="13" viewBox="0 0 14 13"><path d="M0.500 0.500H13.500V12.500H0.500ZM3.500 2.500H10.500V10.500H3.500ZM5 4.500H9M5 6.500H9M5 8.500H9" stroke="#fff" fill="none" /></svg>
        </button>
        <button aria-label="Quebra de página" className="flex h-[21px] w-[38px] items-center justify-center">
          <svg width="14" height="13" viewBox="0 0 14 13"><path d="M0.500 0.500H13.500V12.500H0.500Z" stroke="#fff" fill="none" /><path d="M1 1H4.500V8H1ZM5.500 1H9V8H5.500Z" fill="#fff" /></svg>
        </button>
        <button aria-label="Menos zoom" className="ml-[5px]"><svg width="6" height="8" viewBox="0 0 6 8" className="block"><path d="M0 4H6" stroke="#fff" strokeWidth="2" /></svg></button>
        <input
          type="range"
          aria-label="Zoom"
          defaultValue={50}
          className="mx-[4px] h-[11px] w-[100px] appearance-none bg-[linear-gradient(#fff,#fff)] bg-[length:100%_1px] bg-center bg-no-repeat [&::-webkit-slider-thumb]:h-[11px] [&::-webkit-slider-thumb]:w-1 [&::-webkit-slider-thumb]:appearance-none [&::-webkit-slider-thumb]:bg-white"
        />
        <button aria-label="Mais zoom"><svg width="8" height="8" viewBox="0 0 8 8" className="block"><path d="M0 4H8M4 0V8" stroke="#fff" strokeWidth="2" /></svg></button>
        <span className="ml-4">100%</span>
      </div>
    </div>
  );
}

function ExcelWindow() {
  return (
    <div className={`absolute top-[66px] left-[325px] w-[695px] border border-[#217346] bg-white text-xs text-[#444] shadow-[1px_2px_8px_1px_rgba(0,0,0,0.5)] ${ui}`}>
      <QuickAccess />
      <RibbonTabs />
      <Ribbon />
      <FormulaBar />
      <Sheet />
      <SheetTabs />
      <StatusBar />
    </div>
  );
}

/* ---------- action bars ---------- */

const action = "flex h-6 items-center justify-center gap-1 border border-black bg-[#f0f0f0]";

function ActionBar() {
  return (
    <div className="flex h-[34px] items-center gap-[6px] pl-[3px]">
      <button className={`${action} w-[72px]`}>
        <svg width="17" height="17" viewBox="0 0 17 17" aria-hidden="true"><path d="M6 1H11V6H16V11H11V16H6V11H1V6H6Z" fill="#9bd37c" stroke="#7dbb6c" /><path d="M7.500 2V7.500H2" stroke="#d5efc6" fill="none" /></svg>
        Novo
      </button>
      <button className={`${action} w-[79px]`}>
        <svg width="16" height="16" viewBox="0 0 16 16" aria-hidden="true">
          <path d="M1 1 6 2.500 13 9 9.500 13 3 6.500Z" fill="#f6b44a" stroke="#d98a26" strokeWidth="0.700" />
          <path d="M1 1 5 2 2.800 4.800Z" fill="#444" /><path d="M5 3.500 12 10" stroke="#ffe0a0" strokeWidth="1.500" />
          <path d="M12.500 8.500 15.500 12Q15 15 12 15.500L9 12.500Z" fill="#e58a86" /><path d="M12 9 9.500 12" stroke="#c8c8c8" strokeWidth="1.600" />
        </svg>
        Editar
      </button>
      <button className={`${action} w-[81px]`}>
        <svg width="15" height="15" viewBox="0 0 15 15" aria-hidden="true"><path d="M3.500 0.800 7.500 4.800 11.500 0.800 14.200 3.500 10.200 7.500 14.200 11.500 11.500 14.200 7.500 10.200 3.500 14.200 0.800 11.500 4.800 7.500 0.800 3.500Z" fill="#ff6254" stroke="#e04a40" /></svg>
        Excluir
      </button>
      <button className={`${action} -ml-px w-[100px]`}>
        <svg width="16" height="15" viewBox="0 0 16 15" aria-hidden="true">
          <path d="M0.500 13.500V2.500H5L6.500 4.500H11.500V13.500Z" fill="#fbd785" stroke="#b98538" />
          <path d="M0.500 13.500 3.500 7H14.500L12.500 13.500Z" fill="#fde8b4" stroke="#b98538" />
          <path d="M11 0.700 15.500 5.500H13V9.500H9V5.500H6.500Z" fill="#7cc637" stroke="#3d7d14" />
        </svg>
        Importar
      </button>
      <div className="relative">
        <button className="flex h-6 w-[100px] items-center justify-center gap-[6px] border-2 border-[#6b6b6b] bg-[#f0f0f0]">
          <svg width="12" height="15" viewBox="0 0 12 15" aria-hidden="true">
            <path d="M3.500 0.500H8.500V4H11L6 10 1 4H3.500Z" fill="#84cb3c" stroke="#4a8d1d" />
            <path d="M5 1.500V7" stroke="#d3f0ac" strokeWidth="1.500" /><path d="M1 11.500H11V14H1Z" fill="#b4e07c" stroke="#4a8d1d" />
          </svg>
          Exportar
        </button>
        <span className="pointer-events-none absolute -top-3 -right-[13px] -bottom-2 -left-3 border-[3px] border-[#ec4b45]" />
        <svg width="100" height="64" viewBox="0 0 100 64" className="pointer-events-none absolute -top-[70px] -left-[106px] drop-shadow-[1px_3px_3px_rgba(0,0,0,0.5)]" aria-hidden="true">
          <path d="M9.500 10.500 70 42.500" stroke="#ec4b45" strokeWidth="10" strokeLinecap="round" />
          <path d="M76 29.500 94 56 61 55Z" fill="#ec4b45" />
        </svg>
      </div>
      <a href="#exemplo" className="mr-[9px] ml-auto text-[#0000ff] underline">Baixar arquivo exemplo da importação</a>
    </div>
  );
}

function Arrow({ flip }: { flip?: boolean }) {
  return (
    <svg width="22" height="16" viewBox="0 0 22 16" className={flip ? "-scale-x-100" : ""} aria-hidden="true">
      <path d="M0.700 8 8.500 0.800V4.500H21.300V11.500H8.500V15.200Z" fill="#a5dc8b" stroke="#4a9f31" />
      <path d="M3 8 7.500 4V6H20V8Z" fill="#d7f3ca" />
    </svg>
  );
}

const nav = "flex h-[29px] w-[95px] items-center gap-[5px] border border-black bg-white pl-[6px] font-bold";

function NavigationBar() {
  return (
    <div className="mr-[3px] mb-[2px] ml-[4px] flex h-[31px] items-end border-b border-[#8c8c8c] pt-px">
      <div className="flex gap-[9px]">
        <button className={nav}><Arrow />Anterior</button>
        <button className={nav}><Arrow flip />Próximo</button>
        <button className={nav}>
          <svg width="22" height="17" viewBox="0 0 22 17" aria-hidden="true"><path d="M0.800 9 4.500 5.500 9 9.500 17.500 0.800 21.200 2.500 9.500 16Z" fill="#8fd45f" stroke="#4a9f31" /></svg>
          Finalizar
        </button>
      </div>
      <button className={`${nav} mr-[3px] ml-auto`}>
        <svg width="28" height="24" viewBox="-6 0 28 24" aria-hidden="true">
          <path d="M1 1H19V22H1Z" fill="#5a2a12" /><path d="M10 3H17V21H10Z" fill="#2b1208" />
          <path d="M3 2 12 4V24L3 21Z" fill="#a85a2c" stroke="#6e3515" strokeWidth="0.800" />
          <path d="M4.500 5 7 5.500V10L4.500 9.500ZM8 5.700 10.500 6.200V10.700L8 10.200ZM4.500 12 7 12.500V19.500L4.500 19ZM8 12.700 10.500 13.200V20.500L8 20Z" fill="#d08a55" />
          <path d="M12.500 12H14" stroke="#e8c25a" strokeWidth="1.500" />
        </svg>
        Fechar
      </button>
    </div>
  );
}

export default function App() {
  return (
    <div className="flex min-h-screen flex-col overflow-x-hidden bg-white font-['DejaVu_Sans',sans-serif] text-[11px] leading-[15px] text-black">
      <TitleBar />
      <MenuBar />
      <div className="flex flex-1 border-t border-[#d9d9d9]">
        <Sidebar />
        <main className="flex min-w-0 flex-1 flex-col">
          <DocumentTabs />
          <div className="mt-[5px] mr-[2px] mb-[2px] flex flex-1 flex-col border-y border-r border-[#d9d9d9]">
            <h1 className="mt-1 text-center text-[13px] leading-4 font-bold">Faixa de CEP - Origem/Destino</h1>
            <div role="tablist" className="z-10 -mt-px -mb-px ml-[4px] flex h-[21px] items-end">
              <button role="tab" aria-selected="true" className="h-[21px] w-[68px] border-x border-t border-[#d9d9d9] bg-white pb-px">Cadastro</button>
              <button role="tab" aria-selected="false" className="h-[19px] w-[77px] border border-l-0 border-[#d9d9d9] bg-[#f0f0f0] pt-px">Manutenção</button>
            </div>
            <section className="mr-[2px] ml-[4px] flex flex-1 flex-col border border-[#d9d9d9] px-[3px] pt-[3px]">
              <div className="relative flex-1 border border-[#8c8c8c]">
                <RangeTable />
                <ExcelWindow />
              </div>
              <ActionBar />
            </section>
            <NavigationBar />
          </div>
        </main>
      </div>
    </div>
  );
}
